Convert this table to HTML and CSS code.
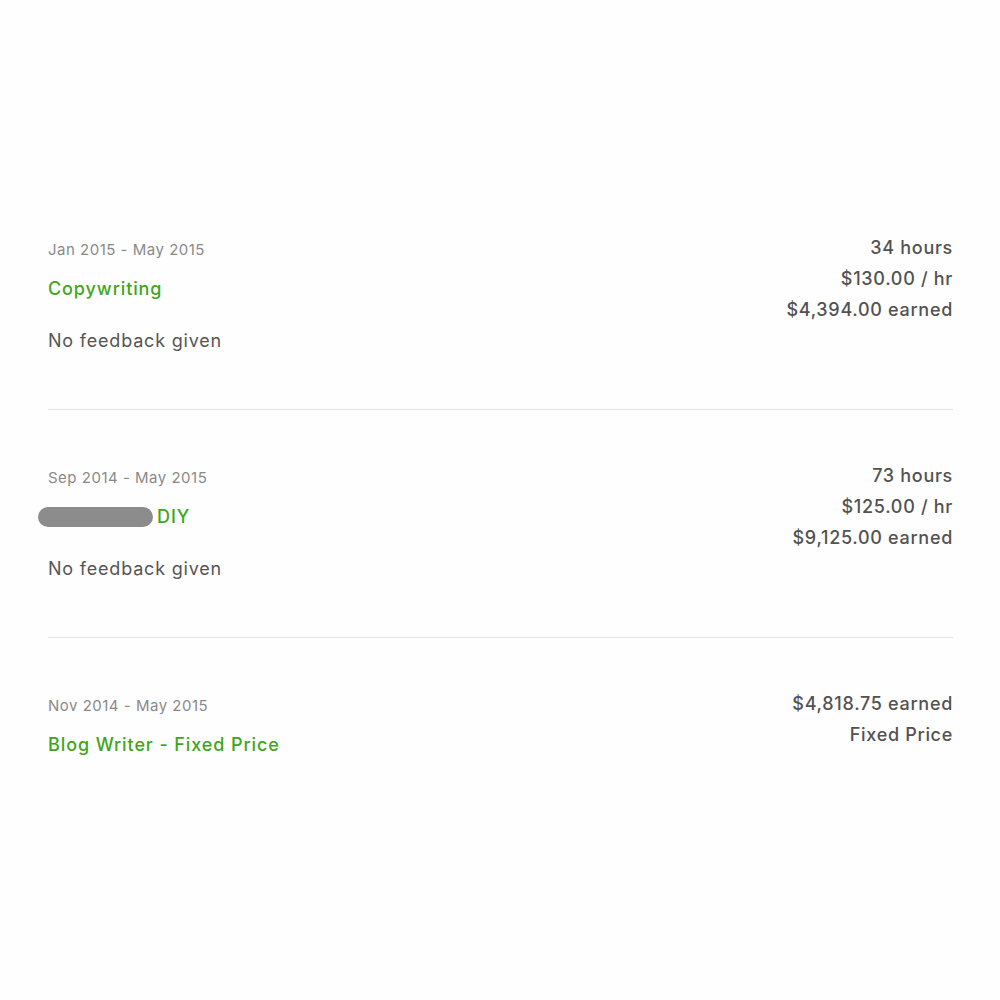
FILE: index.html
```html
<!DOCTYPE html>
<html>
<head>
<meta charset="utf-8">
<link rel="stylesheet" href="styles.css">
</head>
<body>
<main class="list">
  <section class="job">
    <div class="left">
      <div class="date">Jan 2015 - May 2015</div>
      <div class="title">Copywriting</div>
      <div class="feedback">No feedback given</div>
    </div>
    <div class="right">
      <div class="stat">34 hours</div>
      <div class="stat">$130.00 / hr</div>
      <div class="stat">$4,394.00 earned</div>
    </div>
  </section>
  <section class="job">
    <div class="left">
      <div class="date">Sep 2014 - May 2015</div>
      <div class="title"><span class="redact"></span>DIY</div>
      <div class="feedback">No feedback given</div>
    </div>
    <div class="right">
      <div class="stat">73 hours</div>
      <div class="stat">$125.00 / hr</div>
      <div class="stat">$9,125.00 earned</div>
    </div>
  </section>
  <section class="job last">
    <div class="left">
      <div class="date">Nov 2014 - May 2015</div>
      <div class="title">Blog Writer - Fixed Price</div>
    </div>
    <div class="right">
      <div class="stat">$4,818.75 earned</div>
      <div class="stat">Fixed Price</div>
    </div>
  </section>
</main>
</body>
</html>
```
FILE: styles.css
```css
html, body {
  margin: 0;
  padding: 0;
  background: #fefefe;
}
body {
  font-family: "Inter", "Liberation Sans", sans-serif;
  color: #555;
}
.list {
  padding: 182px 47px 0 48px;
}
.job {
  display: flex;
  justify-content: space-between;
  align-items: flex-start;
  padding: 50px 0 56px;
  border-bottom: 1px solid #e3e3e3;
}
.job.last {
  border-bottom: none;
}
.date {
  font-size: 15px;
  line-height: 35px;
  letter-spacing: 0.5px;
  color: #8a8a8a;
}
.title {
  margin-top: 10px;
  font-size: 18px;
  line-height: 24px;
  font-weight: 500;
  letter-spacing: 0.9px;
  color: #3fa61a;
  display: flex;
  align-items: center;
}
.redact {
  display: inline-block;
  width: 115px;
  height: 20px;
  border-radius: 10px;
  background: #8c8c8c;
  margin-left: -10px;
  margin-right: 4px;
}
.feedback {
  margin-top: 28px;
  font-size: 18px;
  line-height: 24px;
  letter-spacing: 0.8px;
  color: #555;
}
.right {
  text-align: right;
}
.stat {
  font-size: 18px;
  line-height: 31px;
  font-weight: 500;
  letter-spacing: 0.7px;
  color: #525252;
}
```
